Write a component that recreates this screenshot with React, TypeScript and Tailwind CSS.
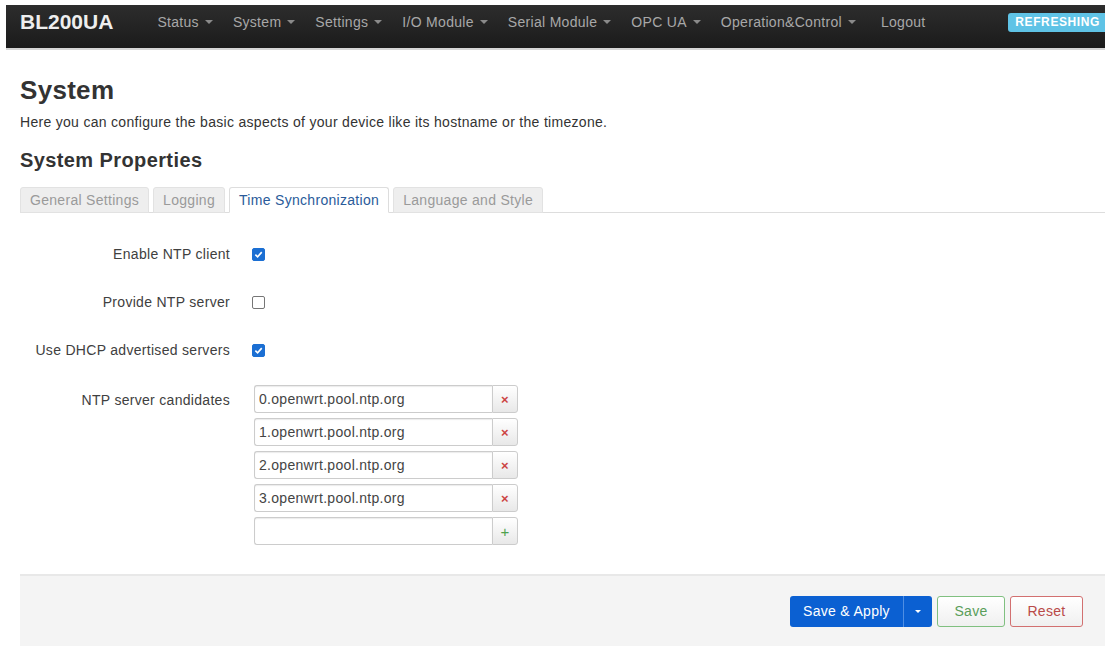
import { useState } from 'react';

const navItems = ['Status', 'System', 'Settings', 'I/O Module', 'Serial Module', 'OPC UA', 'Operation&Control'];
const tabs = ['General Settings', 'Logging', 'Time Synchronization', 'Language and Style'];

const Caret = () => (
  <span className="ml-[6px] inline-block w-0 h-0 border-l-[4px] border-r-[4px] border-t-[4px] border-transparent border-t-[#8a8a8a]" />
);

const Check = ({ checked }: { checked: boolean }) => (
  <span
    className={`flex w-[13px] h-[13px] items-center justify-center rounded-[2px] border ${
      checked ? 'bg-[#1b6fd3] border-[#1b6fd3]' : 'bg-white border-[#767676]'
    }`}
  >
    {checked && (
      <svg width="9" height="9" viewBox="0 0 10 10">
        <path d="M1.5 5.2 L4 7.6 L8.6 2.4" fill="none" stroke="white" strokeWidth="1.8" />
      </svg>
    )}
  </span>
);

const App = () => {
  const [servers, setServers] = useState([
    '0.openwrt.pool.ntp.org',
    '1.openwrt.pool.ntp.org',
    '2.openwrt.pool.ntp.org',
    '3.openwrt.pool.ntp.org',
  ]);

  return (
    <div className="min-h-[664px] bg-white pt-[5px] pl-[6px] font-['Liberation_Sans',Arial,sans-serif] text-[#333] tracking-[0.3px]">
      {/* top bar */}
      <header className="h-[45px] flex items-start bg-gradient-to-b from-[#2d2d2d] to-[#1b1b1b] border-b-[2px] border-[#d6d6d6] overflow-hidden">
        <span className="ml-[14px] mr-[44px] pt-[3px] text-[21px] leading-[28px] font-bold text-[#eee] tracking-normal">
          BL200UA
        </span>
        <nav className="flex items-center gap-[20px] pt-[7px] text-[14px] leading-[20px] text-[#a8a8a8]">
          {navItems.map((n) => (
            <span key={n} className="flex items-center whitespace-nowrap">
              {n}
              <Caret />
            </span>
          ))}
          <span className="ml-[5px]">Logout</span>
        </nav>
        <span className="ml-auto mt-[8px] rounded-l-[3px] bg-[#5fc3e6] pl-[7px] pr-[5px] text-[12px] leading-[19px] font-bold text-white whitespace-nowrap tracking-[0.6px]">
          REFRESHING
        </span>
      </header>

      <main className="pl-[14px]">
        <h2 className="mt-[25px] text-[26px] font-bold leading-[30px] text-[#333] tracking-[0.3px]">System</h2>
        <p className="mt-[7px] text-[14px] leading-[20px] text-[#333]">
          Here you can configure the basic aspects of your device like its hostname or the timezone.
        </p>
        <h3 className="mt-[15px] text-[20px] font-bold leading-[26px] text-[#333] tracking-[0.4px]">System Properties</h3>

        <div className="mt-[14px] flex items-end border-b border-[#ddd]">
          {tabs.map((t) => {
            const active = t === 'Time Synchronization';
            return (
              <span
                key={t}
                className={`mr-[4px] -mb-px rounded-t-[3px] border px-[9px] py-[3px] text-[14px] leading-[18px] ${
                  active
                    ? 'border-[#ddd] border-b-white bg-white text-[#2a5b9a]'
                    : 'border-[#e2e2e2] bg-[#eee] text-[#9a9a9a]'
                }`}
              >
                {t}
              </span>
            );
          })}
        </div>

        <div className="mt-[32px] flex flex-col gap-[30px] text-[14px]">
          {[
            ['Enable NTP client', true],
            ['Provide NTP server', false],
            ['Use DHCP advertised servers', true],
          ].map(([label, on]) => (
            <div key={label as string} className="flex items-center h-[18px]">
              <span className="w-[210px] text-right text-[#404040]">{label}</span>
              <span className="ml-[22px]">
                <Check checked={on as boolean} />
              </span>
            </div>
          ))}

          <div className="-mt-[4px] flex">
            <span className="w-[210px] pt-[5px] text-right text-[#404040]">NTP server candidates</span>
            <div className="ml-[24px] flex flex-col gap-[5px]">
              {[...servers, ''].map((s, i) => {
                const last = i === servers.length;
                return (
                  <div key={i} className="flex h-[28px] w-[264px]">
                    <input
                      value={s}
                      onChange={(e) => {
                        const next = [...servers];
                        next[i] = e.target.value;
                        setServers(next);
                      }}
                      className="w-[238px] rounded-l-[3px] border border-r-0 border-[#ccc] px-[4px] text-[14px] tracking-[0.3px] text-[#444] shadow-[inset_0_1px_1px_rgba(0,0,0,0.08)] outline-none"
                    />
                    <button
                      className={`w-[26px] rounded-r-[3px] border border-[#ccc] bg-gradient-to-b from-white to-[#e8e8e8] leading-none ${
                        last ? 'text-[15px] text-[#4ea24e]' : 'text-[13px] text-[#cc4444] font-bold'
                      }`}
                    >
                      {last ? '+' : '×'}
                    </button>
                  </div>
                );
              })}
            </div>
          </div>
        </div>

        <div className="mt-[29px] flex h-[72px] items-center justify-end border-t-2 border-[#e8e8e8] bg-[#f4f4f4] pr-[22px] text-[14px]">
          <div className="flex h-[31px] overflow-hidden rounded-[3px] bg-[#0b60d2] text-white">
            <span className="flex w-[113px] items-center justify-center">Save &amp; Apply</span>
            <span className="flex w-[29px] items-center justify-center border-l border-[#4f8ee3]">
              <span className="inline-block w-0 h-0 border-l-[3px] border-r-[3px] border-t-[3px] border-transparent border-t-white" />
            </span>
          </div>
          <span className="ml-[5px] flex h-[31px] w-[68px] items-center justify-center rounded-[3px] border border-[#80c080] bg-gradient-to-b from-white to-[#f0f0f0] text-[#5a9e5a]">
            Save
          </span>
          <span className="ml-[5px] flex h-[31px] w-[73px] items-center justify-center rounded-[3px] border border-[#d27070] bg-gradient-to-b from-white to-[#f0f0f0] text-[#b94a48]">
            Reset
          </span>
        </div>
      </main>
    </div>
  );
};

export default App;
